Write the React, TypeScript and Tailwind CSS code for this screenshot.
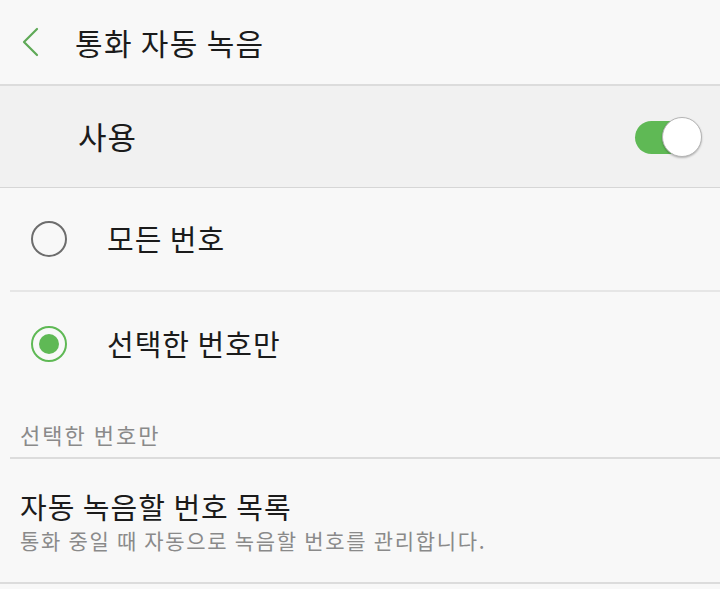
const font = { fontFamily: '"Noto Sans CJK KR", "Noto Sans", sans-serif' };

function Radio({ checked }: { checked: boolean }) {
  return checked ? (
    <div className="w-[36px] h-[36px] rounded-full border-2 border-[#5fb955] flex items-center justify-center">
      <div className="w-[20px] h-[20px] rounded-full bg-[#5fb955]" />
    </div>
  ) : (
    <div className="w-[36px] h-[36px] rounded-full border-2 border-[#6d6d6d]" />
  );
}

export default function App() {
  return (
    <div className="w-[720px] h-[589px] bg-[#f8f8f8] overflow-hidden text-[#1b1b1b]" style={font}>
      {/* Header */}
      <div className="h-[86px] flex items-center border-b-2 border-[#dcdcdc]">
        <svg className="ml-[21px]" width="18" height="30" viewBox="0 0 18 30" fill="none">
          <path d="M16 2 L3 15 L16 28" stroke="#5fa957" strokeWidth="2.2" strokeLinecap="round" strokeLinejoin="round" />
        </svg>
        <span className="ml-[36px] text-[30px] tracking-[1.3px]">통화 자동 녹음</span>
      </div>

      {/* Master switch */}
      <div className="h-[102px] bg-[#f1f1f1] flex items-center justify-between border-b border-[#d6d6d6] pl-[78px] pr-[18px]">
        <span className="text-[31px] tracking-[1px]">사용</span>
        <div className="relative w-[67px] h-[40px]">
          <div className="absolute left-0 top-[4px] w-[60px] h-[33px] rounded-full bg-[#5fb955]" />
          <div className="absolute right-0 top-0 w-[40px] h-[40px] rounded-full bg-white border border-[#b5b5b5] shadow-[0_1px_2px_rgba(0,0,0,0.25)]" />
        </div>
      </div>

      {/* Options */}
      <div className="h-[102px] flex items-center pl-[31px]">
        <Radio checked={false} />
        <span className="ml-[40px] text-[29px] tracking-[1px]">모든 번호</span>
      </div>
      <div className="ml-[10px] border-t-2 border-[#e6e6e6]" />
      <div className="h-[103px] flex items-center pl-[31px]">
        <Radio checked />
        <span className="ml-[40px] text-[29px] tracking-[1px]">선택한 번호만</span>
      </div>

      {/* Section */}
      <div className="h-[62px] flex items-end pl-[20px] pb-[6px]">
        <span className="text-[22px] text-[#8a8a8a] tracking-[2px]">선택한 번호만</span>
      </div>
      <div className="ml-[10px] border-t-2 border-[#dcdcdc]" />
      <div className="h-[125px] flex flex-col justify-center pl-[20px] border-b-2 border-[#dcdcdc]">
        <span className="text-[29px] leading-[38px] tracking-[1px]">자동 녹음할 번호 목록</span>
        <span className="text-[21px] leading-[30px] text-[#8a8a8a] tracking-[1.7px]">통화 중일 때 자동으로 녹음할 번호를 관리합니다.</span>
      </div>
    </div>
  );
}
